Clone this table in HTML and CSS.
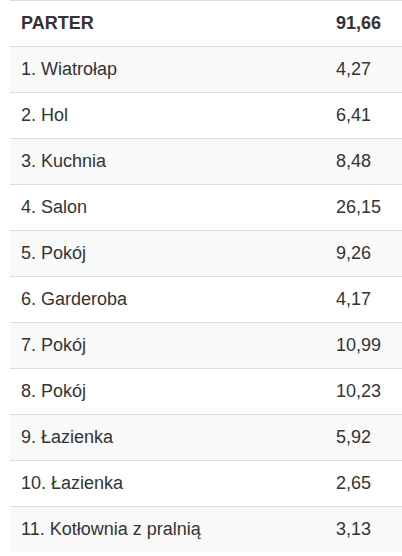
FILE: index.html
```html
<!DOCTYPE html>
<html lang="pl">
<head>
<meta charset="utf-8">
<link rel="stylesheet" href="styles.css">
</head>
<body>
<table class="rooms">
  <tbody>
    <tr class="head"><td class="name">PARTER</td><td class="val">91,66</td></tr>
    <tr><td class="name">1. Wiatrołap</td><td class="val">4,27</td></tr>
    <tr><td class="name">2. Hol</td><td class="val">6,41</td></tr>
    <tr><td class="name">3. Kuchnia</td><td class="val">8,48</td></tr>
    <tr><td class="name">4. Salon</td><td class="val">26,15</td></tr>
    <tr><td class="name">5. Pokój</td><td class="val">9,26</td></tr>
    <tr><td class="name">6. Garderoba</td><td class="val">4,17</td></tr>
    <tr><td class="name">7. Pokój</td><td class="val">10,99</td></tr>
    <tr><td class="name">8. Pokój</td><td class="val">10,23</td></tr>
    <tr><td class="name">9. Łazienka</td><td class="val">5,92</td></tr>
    <tr><td class="name">10. Łazienka</td><td class="val">2,65</td></tr>
    <tr><td class="name">11. Kotłownia z pralnią</td><td class="val">3,13</td></tr>
  </tbody>
</table>
</body>
</html>
```
FILE: styles.css
```css
html, body {
  margin: 0;
  padding: 0;
  background: #fff;
}
body {
  padding-left: 10px;
  font-family: "Liberation Sans", Arial, sans-serif;
  font-size: 18px;
  color: #333;
}
.rooms {
  width: 392px;
  border-collapse: collapse;
  border-spacing: 0;
  table-layout: fixed;
}
.rooms td {
  padding: 12px 10px;
  line-height: 21px;
  border-top: 1px solid #ddd;
  vertical-align: top;
}
.rooms .name {
  width: 298px;
  padding-left: 11px;
  padding-right: 7px;
}
.rooms tr:nth-child(even) td {
  background: #f9f9f9;
}
.rooms .head td {
  font-weight: bold;
}
```
